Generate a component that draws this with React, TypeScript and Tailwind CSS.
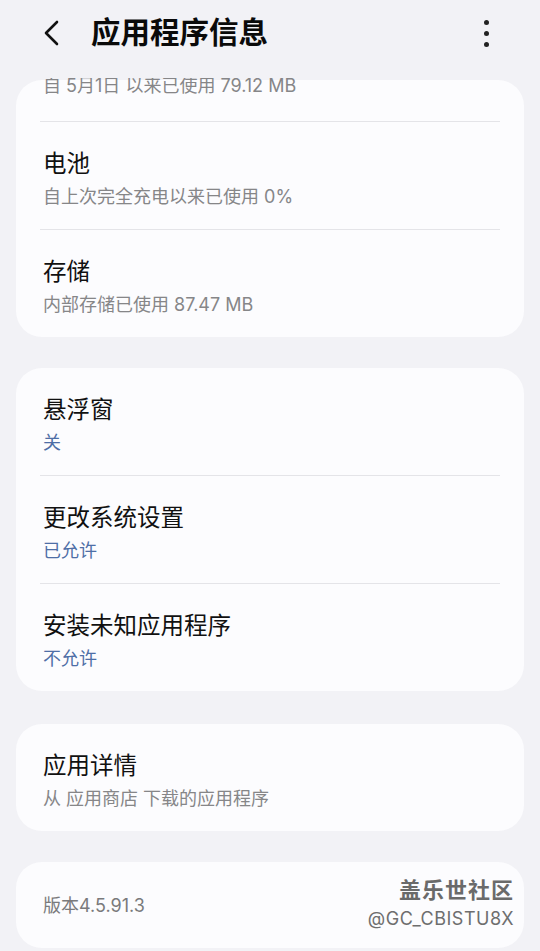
import React from "react";

const font = { fontFamily: 'Inter, "Noto Sans CJK SC", sans-serif' };

function Row({ title, sub, blue }: { title: string; sub: string; blue?: boolean }) {
  return (
    <div className="pt-[28px] pb-[20px] px-[27px]">
      <div className="text-[23.5px] leading-[28px] text-[#111]">{title}</div>
      <div className={`mt-[7px] text-[18px] leading-[24px] ${blue ? "text-[#4e6ea6]" : "text-[#868688]"}`}>{sub}</div>
    </div>
  );
}

function Divider() {
  return <div className="mx-[24px] h-[1px] bg-[#e4e4e8]" />;
}

export default function App() {
  return (
    <div className="w-[540px] h-[951px] overflow-hidden bg-[#f2f2f6] relative" style={font}>
      <div className="relative z-10 h-[78px] bg-[#f2f2f6] flex items-start">
        <div className="flex items-center h-[66px] w-full">
          <svg className="ml-[42px]" width="20" height="30" viewBox="0 0 20 30">
            <path d="M15 4 L4 15 L15 26" fill="none" stroke="#111" strokeWidth="2.6" strokeLinecap="round" strokeLinejoin="round" />
          </svg>
          <div className="ml-[29px] text-[29.5px] font-bold text-[#0a0a0a] leading-none">应用程序信息</div>
          <div className="ml-auto mr-[51px] flex flex-col gap-[6px] items-center">
            <div className="w-[5px] h-[5px] rounded-full bg-[#222]" />
            <div className="w-[5px] h-[5px] rounded-full bg-[#222]" />
            <div className="w-[5px] h-[5px] rounded-full bg-[#222]" />
          </div>
        </div>
      </div>

      <div className="px-[16px] mt-[2px] flex flex-col">
        <div className="bg-[#fcfcfe] rounded-[26px]">
          <div className="px-[27px] -mt-[6px] pb-[23px]">
            <div className="text-[18px] leading-[24px] text-[#868688]">自 5月1日 以来已使用 79.12 MB</div>
          </div>
          <Divider />
          <Row title="电池" sub="自上次完全充电以来已使用 0%" />
          <Divider />
          <Row title="存储" sub="内部存储已使用 87.47 MB" />
        </div>

        <div className="bg-[#fcfcfe] rounded-[26px] mt-[31px]">
          <Row title="悬浮窗" sub="关" blue />
          <Divider />
          <Row title="更改系统设置" sub="已允许" blue />
          <Divider />
          <Row title="安装未知应用程序" sub="不允许" blue />
        </div>

        <div className="bg-[#fcfcfe] rounded-[26px] mt-[33px]">
          <Row title="应用详情" sub="从 应用商店 下载的应用程序" />
        </div>

        <div className="bg-[#fcfcfe] rounded-[26px] mt-[31px] h-[86px] flex items-center px-[27px] relative">
          <div className="text-[18px] text-[#7a7a7c]">版本4.5.91.3</div>
          <div className="absolute right-[10px] top-[14px] flex flex-col items-end">
            <div className="text-[22px] leading-[28px] font-bold text-[#6a6a6a] tracking-[1px]">盖乐世社区</div>
            <div className="text-[18px] leading-[24px] text-[#6e6e6e] mt-[3px] tracking-[0.5px]">@GC_CBISTU8X</div>
          </div>
        </div>
      </div>
    </div>
  );
}
